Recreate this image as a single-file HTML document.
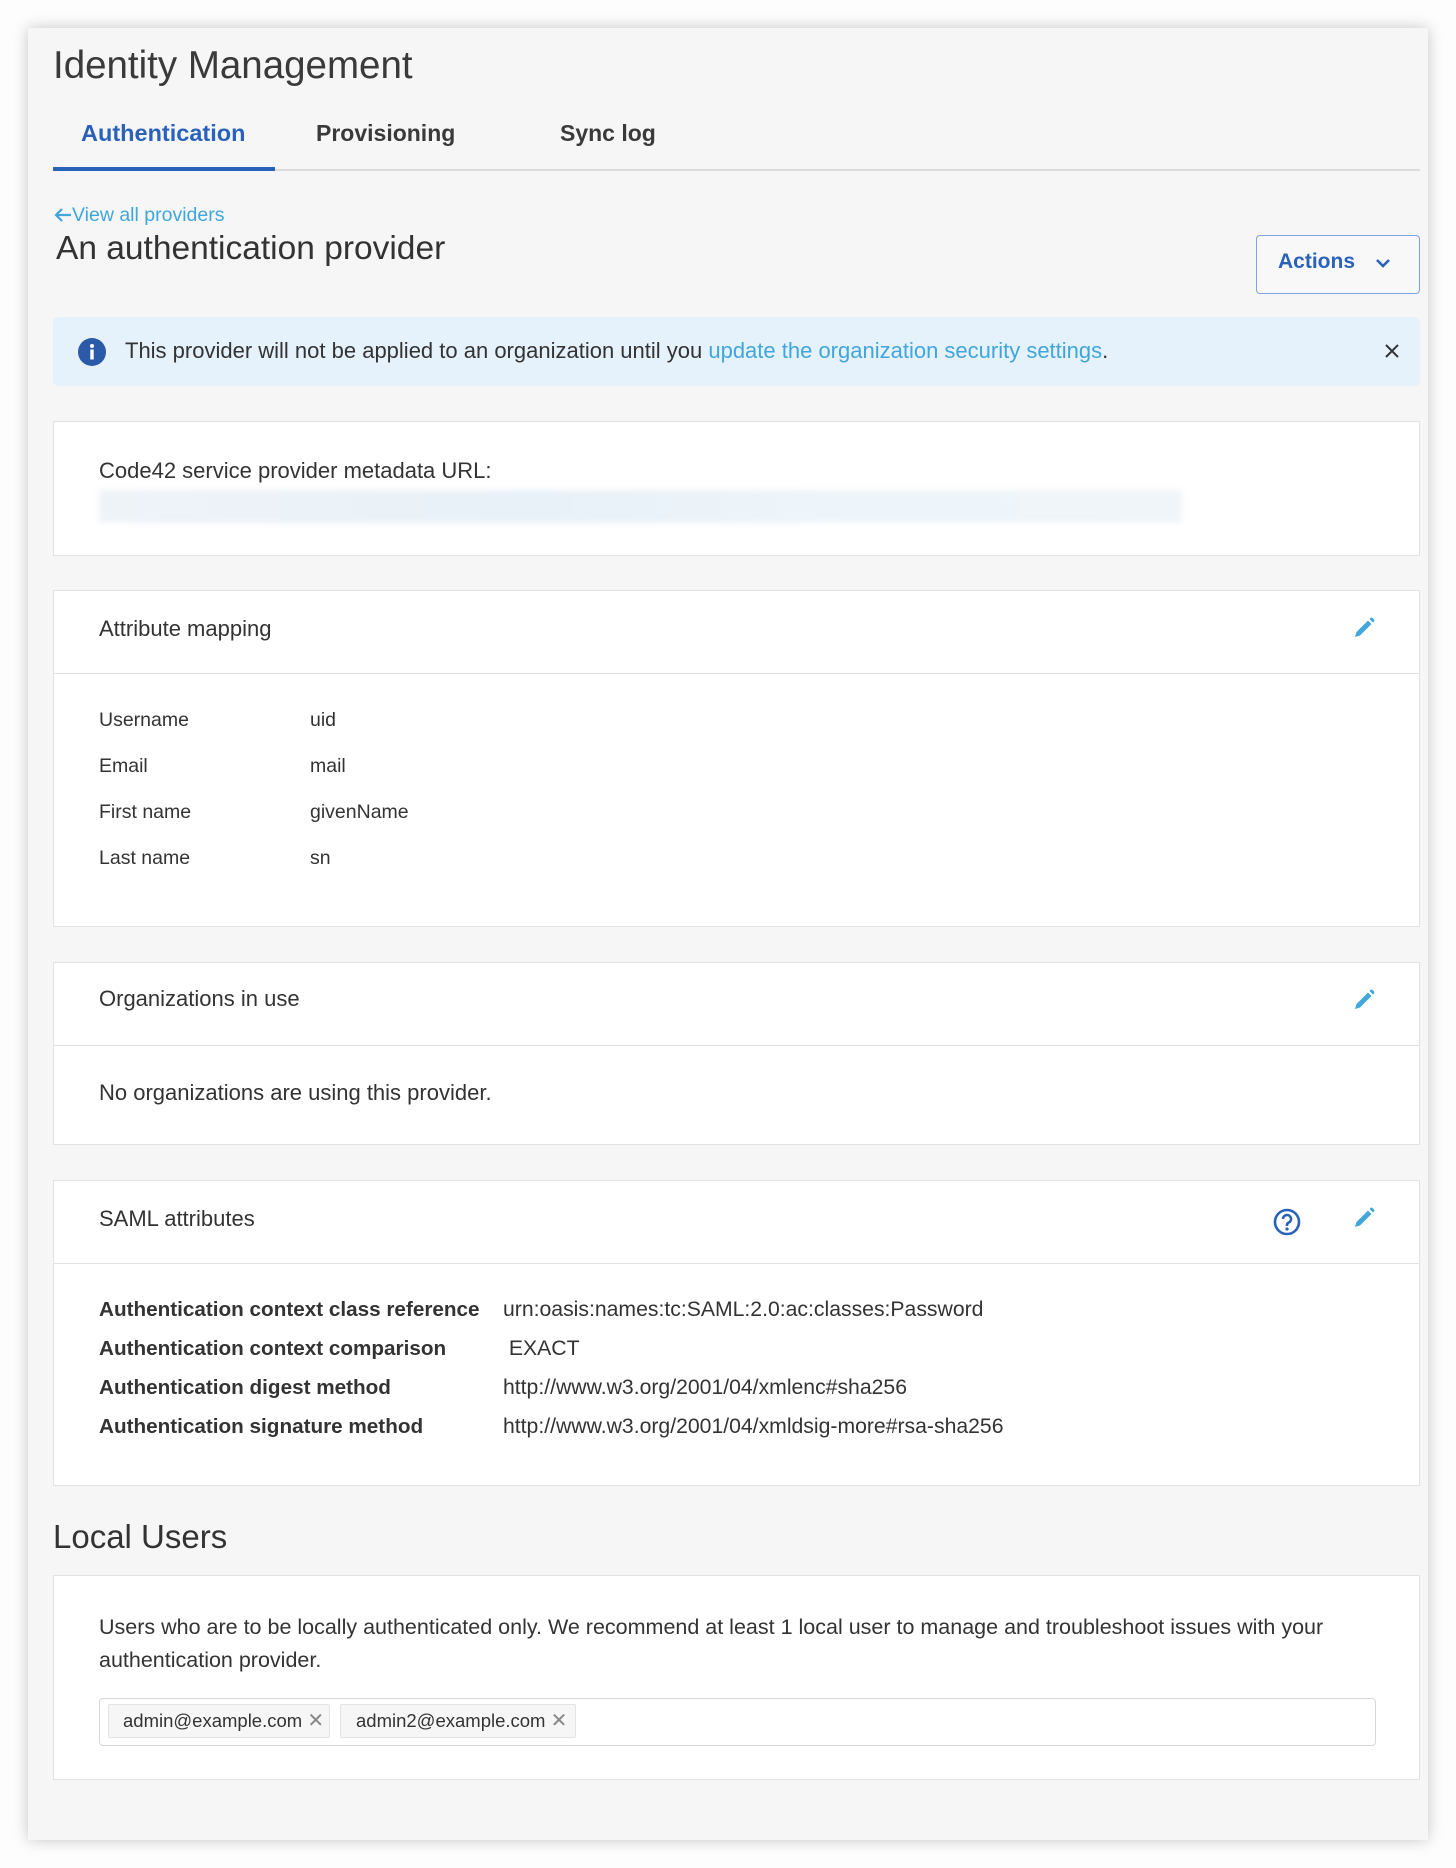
<!DOCTYPE html>
<html><head><style>
*{box-sizing:border-box;margin:0;padding:0}
body{width:1456px;height:1868px;background:#fdfdfd;font-family:"Liberation Sans",sans-serif;color:#333;position:relative;overflow:hidden}
.panel{position:absolute;left:28px;top:28px;width:1400px;height:1812px;background:#f6f6f6;box-shadow:0 0 14px rgba(0,0,0,.22)}
.a{position:absolute;white-space:nowrap}
.card{position:absolute;left:53px;width:1367px;background:#fff;border:1px solid #e2e2e2}
.hr{position:absolute;left:0;right:0;height:1px;background:#e2e2e2}
</style></head><body>
<div class="panel"></div>
<div class="a" style="left:53px;top:44px;font-size:38.5px;color:#3a3a3a">Identity Management</div>
<div class="a" style="left:81px;top:120px;font-size:23.5px;font-weight:bold;color:#2a62bb">Authentication</div>
<div class="a" style="left:316px;top:120px;font-size:23px;font-weight:bold;color:#3a3a3a">Provisioning</div>
<div class="a" style="left:560px;top:120px;font-size:23px;font-weight:bold;color:#3a3a3a">Sync log</div>
<div class="a" style="left:53px;top:169px;width:1367px;height:2px;background:#dcdcdc"></div>
<div class="a" style="left:53px;top:167px;width:222px;height:4px;background:#2a62bb"></div>
<svg class="a" style="left:53px;top:207px" width="20" height="16" viewBox="0 0 20 16"><path d="M18 8H3M9 2L3 8l6 6" stroke="#41a6dc" stroke-width="2.2" fill="none"/></svg>
<div class="a" style="left:72px;top:204px;height:22px;overflow:hidden;font-size:19.5px;color:#41a6dc">View all providers</div>
<div class="a" style="left:56px;top:230px;font-size:33.5px;color:#333">An authentication provider</div>
<div class="a" style="left:1256px;top:235px;width:164px;height:59px;border:1.5px solid #7ea3df;border-radius:4px;background:#f8f8f8"></div>
<div class="a" style="left:1278px;top:250px;font-size:21px;font-weight:bold;color:#2a62bb">Actions</div>
<svg class="a" style="left:1374px;top:256px" width="18" height="14" viewBox="0 0 18 14"><path d="M3 4l6 6 6-6" stroke="#2a62bb" stroke-width="2.6" fill="none"/></svg>
<div class="a" style="left:53px;top:317px;width:1367px;height:69px;background:#e5f1fb;border-radius:5px"></div>
<svg class="a" style="left:78px;top:338px" width="28" height="28" viewBox="0 0 28 28"><circle cx="14" cy="14" r="14" fill="#2b5aa8"/><circle cx="14" cy="8" r="2" fill="#fff"/><rect x="12.3" y="11.5" width="3.4" height="10" fill="#fff"/></svg>
<div class="a" style="left:125px;top:338px;font-size:22px;color:#333">This provider will not be applied to an organization until you <span style="color:#41a6dc">update the organization security settings</span>.</div>
<svg class="a" style="left:1384px;top:343px" width="16" height="16" viewBox="0 0 16 16"><path d="M2 2l12 12M14 2L2 14" stroke="#333" stroke-width="2"/></svg>

<div class="card" style="top:421px;height:135px">
<div class="a" style="left:45px;top:36px;font-size:22px">Code42 service provider metadata URL:</div>
<div class="a" style="left:45px;top:68px;width:1083px;height:33px;background:linear-gradient(90deg,#eef3f8,#e8f1f8 40%,#eef5fa 70%,#eff5f9);filter:blur(3px)"></div>
</div>

<div class="card" style="top:590px;height:337px">
<div class="a" style="left:45px;top:25px;font-size:22px">Attribute mapping</div>
<div class="hr" style="top:82px"></div>
<div class="a" style="left:45px;top:106px;font-size:19.5px;line-height:46px">Username<br>Email<br>First name<br>Last name</div>
<div class="a" style="left:256px;top:106px;font-size:19.5px;line-height:46px">uid<br>mail<br>givenName<br>sn</div>
</div>

<div class="card" style="top:962px;height:183px">
<div class="a" style="left:45px;top:23px;font-size:22px">Organizations in use</div>
<div class="hr" style="top:82px"></div>
<div class="a" style="left:45px;top:117px;font-size:22px">No organizations are using this provider.</div>
</div>

<div class="card" style="top:1180px;height:306px">
<div class="a" style="left:45px;top:25px;font-size:22px">SAML attributes</div>
<div class="hr" style="top:82px"></div>
<div class="a" style="left:45px;top:109px;font-size:20.7px;font-weight:bold;line-height:39px">Authentication context class reference<br>Authentication context comparison<br>Authentication digest method<br>Authentication signature method</div>
<div class="a" style="left:449px;top:109px;font-size:21.2px;line-height:39px">urn:oasis:names:tc:SAML:2.0:ac:classes:Password<br>&nbsp;EXACT<br>http://www.w3.org/2001/04/xmlenc#sha256<br>http://www.w3.org/2001/04/xmldsig-more#rsa-sha256</div>
</div>

<svg class="a" style="left:1273px;top:1208px" width="28" height="28" viewBox="0 0 28 28"><circle cx="14" cy="14" r="12" stroke="#2a62bb" stroke-width="2.6" fill="none"/><path d="M10 11a4 4 0 1 1 5.5 3.7c-1 .5-1.5 1.2-1.5 2.3v1" stroke="#2a62bb" stroke-width="2.6" fill="none"/><circle cx="14" cy="21" r="1.6" fill="#2a62bb"/></svg>

<div class="a" style="left:53px;top:1518px;font-size:33px;color:#333">Local Users</div>
<div class="card" style="top:1575px;height:205px">
<div class="a" style="left:45px;top:35px;font-size:21.5px;line-height:33px;white-space:normal;width:1290px">Users who are to be locally authenticated only. We recommend at least 1 local user to manage and troubleshoot issues with your authentication provider.</div>
<div class="a" style="left:45px;top:122px;width:1277px;height:48px;border:1.5px solid #d8d8d8;border-radius:4px"></div>
<div class="a" style="left:54px;top:128px;width:222px;height:34px;background:#f6f6f6;border:1px solid #e4e4e4;border-radius:2px;font-size:18.5px;line-height:32px;padding-left:14px;color:#333">admin@example.com <span style="color:#888;font-size:20px">&#10005;</span></div>
<div class="a" style="left:286px;top:128px;width:236px;height:34px;background:#f6f6f6;border:1px solid #e4e4e4;border-radius:2px;font-size:18.5px;line-height:32px;padding-left:15px;color:#333">admin2@example.com <span style="color:#888;font-size:20px">&#10005;</span></div>
</div>

<svg class="a" style="left:1352px;top:616px" width="24" height="24" viewBox="0 0 24 24"><path d="M3 21l1.5-5L16 4.5l3.5 3.5L8 19.5z M17.5 3l1-1a1.5 1.5 0 0 1 2 0l1.5 1.5a1.5 1.5 0 0 1 0 2l-1 1z" fill="#41a6dc"/></svg>
<svg class="a" style="left:1352px;top:988px" width="24" height="24" viewBox="0 0 24 24"><path d="M3 21l1.5-5L16 4.5l3.5 3.5L8 19.5z M17.5 3l1-1a1.5 1.5 0 0 1 2 0l1.5 1.5a1.5 1.5 0 0 1 0 2l-1 1z" fill="#41a6dc"/></svg>
<svg class="a" style="left:1352px;top:1206px" width="24" height="24" viewBox="0 0 24 24"><path d="M3 21l1.5-5L16 4.5l3.5 3.5L8 19.5z M17.5 3l1-1a1.5 1.5 0 0 1 2 0l1.5 1.5a1.5 1.5 0 0 1 0 2l-1 1z" fill="#41a6dc"/></svg>
</body></html>
